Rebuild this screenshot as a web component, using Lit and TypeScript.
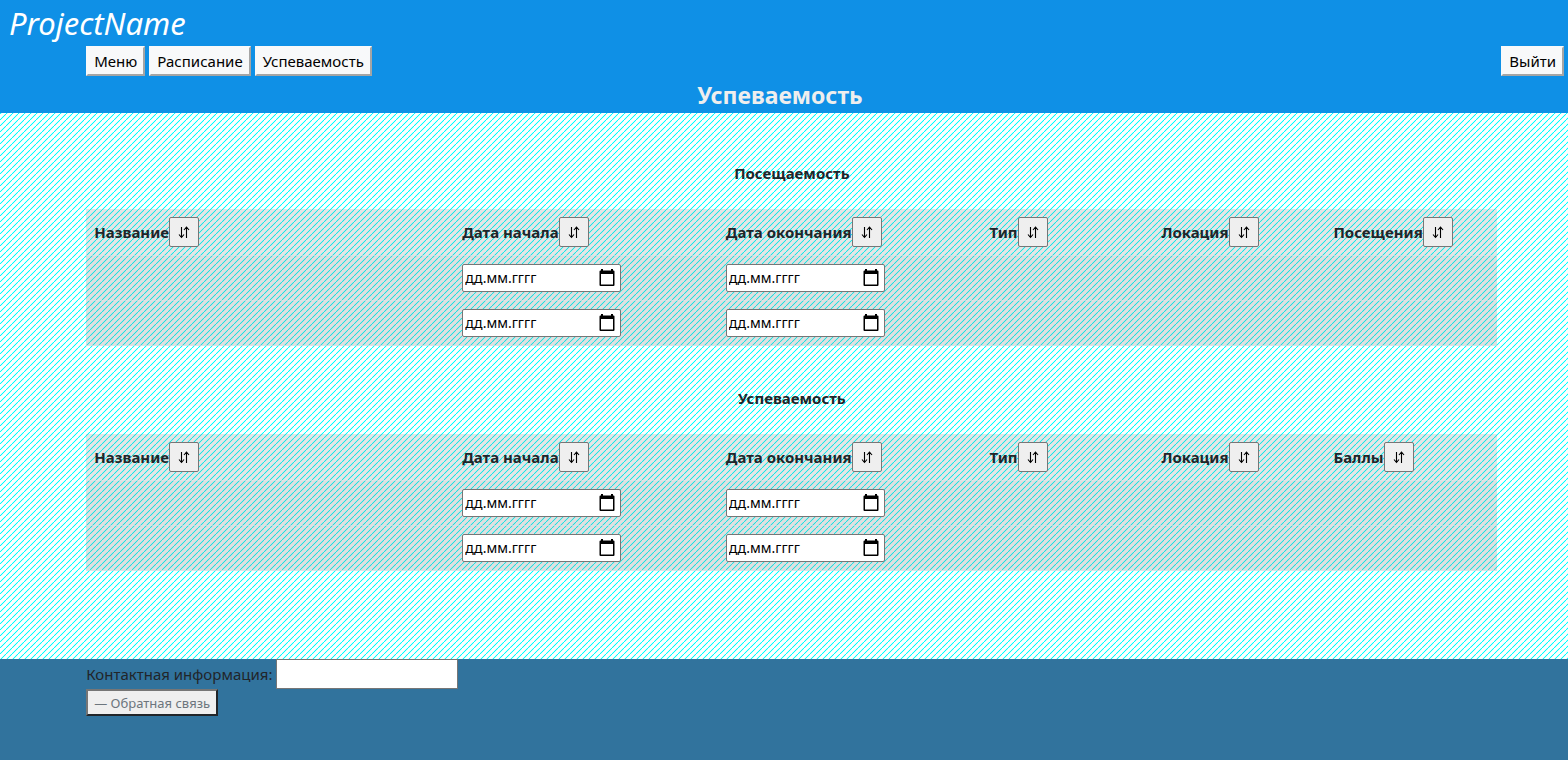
import { LitElement, html, css, svg } from "lit";
import { customElement, property } from "lit/decorators.js";

const sortIcon = html`<svg width="14" height="16" viewBox="0 0 14 16" fill="none" stroke="#000" aria-hidden="true">
  ${svg`<path d="M4.5 3v10.5M2 10.5l2.5 3 2.5-3M9.5 14V3M7 6l2.5-3L12 6" stroke-width="1.1"/>`}
</svg>`;

const calendarIcon = html`<svg width="16" height="18" viewBox="0 0 16 18" aria-hidden="true">
  ${svg`<path fill="#000" fill-rule="evenodd" d="M2 0h2v1.500h8V0h2v1.500h.5a1 1 0 0 1 1 1V16a1 1 0 0 1-1 1h-13a1 1 0 0 1-1-1V2.500a1 1 0 0 1 1-1H2zM2 5v10.500h12V5z"/>`}
</svg>`;

@customElement("date-field")
class DateField extends LitElement {
  @property() label = "";

  static styles = css`
    :host { display: block; }
    .field {
      display: flex;
      align-items: center;
      box-sizing: border-box;
      width: 159px;
      height: 28px;
      padding: 0 5px 0 2px;
      background: #fff;
      border: 1px solid #767676;
      border-radius: 2px;
    }
    .text {
      flex: 1;
      min-width: 0;
      padding: 0;
      border: 0;
      outline: 0;
      background: none;
      font: 14px/24px "Noto Sans", "Open Sans", sans-serif;
      color: #000;
    }
    .text::placeholder { color: #000; opacity: 1; }
    .picker { display: flex; padding: 0; border: 0; background: none; }
  `;

  render() {
    return html`<div class="field">
      <input class="text" type="text" placeholder="дд.мм.гггг" aria-label=${this.label} />
      <button class="picker" type="button" aria-label="Открыть календарь">${calendarIcon}</button>
    </div>`;
  }
}

@customElement("record-table")
class RecordTable extends LitElement {
  @property() heading = "";
  @property() last = "";

  static styles = css`
    :host { display: block; }
    .heading {
      margin: 0;
      padding: 24px 0;
      text-align: center;
      font-size: 15px;
      line-height: 24px;
      font-weight: 700;
    }
    .grid {
      width: 100%;
      table-layout: fixed;
      border-spacing: 0;
      background: rgba(128, 128, 128, 0.2);
    }
    .c1 { width: 26.1%; }
    .c2 { width: 18.7%; }
    .c3 { width: 12.2%; }
    th, td {
      padding: 8px;
      text-align: left;
      vertical-align: top;
      border-bottom: 1px solid rgba(222, 226, 230, 0.6);
    }
    th { font-weight: 700; }
    .head { display: flex; align-items: center; height: 30px; white-space: nowrap; }
    .line { background: rgba(128, 128, 128, 0.06); }
    .sort {
      display: flex;
      align-items: center;
      justify-content: center;
      width: 30px;
      height: 30px;
      padding: 0;
      background: #efefef;
      border: 1px solid #767676;
      border-radius: 2px;
    }
  `;

  render() {
    const columns = ["Название", "Дата начала", "Дата окончания", "Тип", "Локация", this.last];
    return html`
      <h2 class="heading">${this.heading}</h2>
      <table class="grid">
        <colgroup>
          <col class="c1" /><col class="c2" /><col class="c2" />
          <col class="c3" /><col class="c3" /><col class="c3" />
        </colgroup>
        <thead>
          <tr>
            ${columns.map((name) => html`<th scope="col">
              <div class="head">${name}<button class="sort" type="button" aria-label="Сортировать: ${name}">${sortIcon}</button></div>
            </th>`)}
          </tr>
        </thead>
        <tbody>
          ${["от", "до"].map((bound) => html`<tr class="line">
            <td></td>
            <td><date-field label="Дата начала, ${bound}"></date-field></td>
            <td><date-field label="Дата окончания, ${bound}"></date-field></td>
            <td></td><td></td><td></td>
          </tr>`)}
        </tbody>
      </table>
    `;
  }
}

@customElement("app-root")
class AppRoot extends LitElement {
  static styles = css`
    :host {
      display: flex;
      flex-direction: column;
      min-height: 100vh;
      font: 15px/24px "Noto Sans", "Open Sans", sans-serif;
      color: #212529;
      background: linear-gradient(135deg, #fff 40%, #00ffff 50%, #fff 60%) 0 0 / 6px 6px;
    }
    .top { background: #0f90e6; }
    .brand {
      margin: 0;
      padding: 0 9px;
      font-size: 31px;
      line-height: 46px;
      font-style: italic;
      font-weight: 400;
      color: #fff;
    }
    .nav { display: flex; gap: 4px; padding: 0 4px 0 5.5%; }
    .push { margin-left: auto; }
    .btn {
      height: 30px;
      padding: 0 6px;
      font: inherit;
      color: #000;
      background: #f8f9fa;
      border: 2px solid;
      border-color: #f8f9fa #a5a5a5 #a5a5a5 #f8f9fa;
    }
    .title {
      margin: 0;
      padding: 4px 8px 3px 0;
      text-align: center;
      font-size: 23px;
      line-height: 30px;
      font-weight: 700;
      color: #eee;
    }
    .main { width: 90%; margin-left: 5.5%; padding: 24px 0 88px; }
    .second { margin-top: 16px; }
    .foot { flex: 1; padding-left: 5.5%; background: #31739d; }
    .contact { display: flex; align-items: center; gap: 4px; }
    .box {
      box-sizing: border-box;
      width: 182px;
      height: 30px;
      border: 1px solid #767676;
      background: #fff;
      font: inherit;
    }
    .feedback {
      display: block;
      height: 27px;
      padding: 0 6px;
      font: inherit;
      font-size: 13px;
      line-height: 20px;
      color: #6c757d;
      background: #efefef;
      border: 2px solid;
      border-color: #767676 #212529 #212529 #767676;
    }
  `;

  render() {
    return html`
      <header class="top">
        <p class="brand">ProjectName</p>
        <nav class="nav">
          <button class="btn" type="button">Меню</button>
          <button class="btn" type="button">Расписание</button>
          <button class="btn" type="button">Успеваемость</button>
          <button class="btn push" type="button">Выйти</button>
        </nav>
        <h1 class="title">Успеваемость</h1>
      </header>
      <main class="main">
        <record-table heading="Посещаемость" last="Посещения"></record-table>
        <record-table class="second" heading="Успеваемость" last="Баллы"></record-table>
      </main>
      <footer class="foot">
        <div class="contact">
          <label for="contact">Контактная информация:</label>
          <input class="box" id="contact" type="text" />
        </div>
        <button class="feedback" type="button">— Обратная связь</button>
      </footer>
    `;
  }
}
